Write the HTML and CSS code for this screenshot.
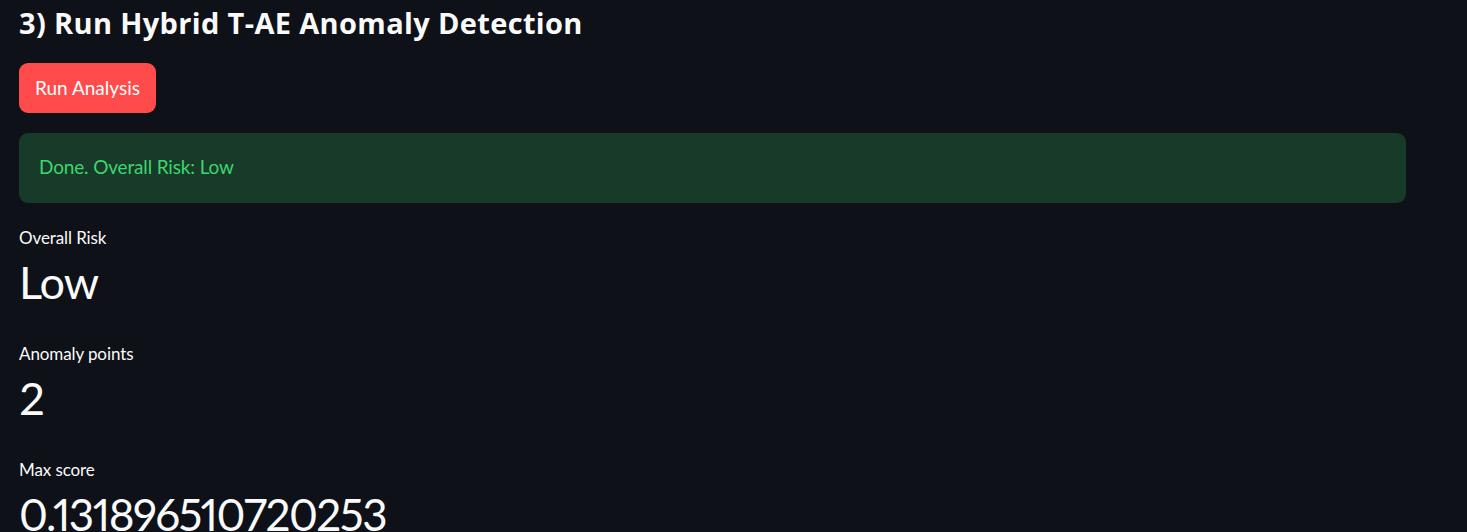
FILE: index.html
```html
<!DOCTYPE html>
<html lang="en">
<head>
<meta charset="utf-8">
<title>Run Hybrid T-AE Anomaly Detection</title>
<link rel="stylesheet" href="styles.css">
</head>
<body>
<main class="main">
  <h3 class="section-title">3) Run Hybrid T-AE Anomaly Detection</h3>
  <div class="button-row">
    <button class="btn-primary" type="button">Run Analysis</button>
  </div>
  <div class="alert-success">Done. Overall Risk: Low</div>
  <div class="metrics">
    <div class="metric">
      <div class="metric-label">Overall Risk</div>
      <div class="metric-value">Low</div>
    </div>
    <div class="metric">
      <div class="metric-label">Anomaly points</div>
      <div class="metric-value">2</div>
    </div>
    <div class="metric">
      <div class="metric-label">Max score</div>
      <div class="metric-value metric-value--long">0.131896510720253</div>
    </div>
  </div>
</main>
</body>
</html>
```
FILE: styles.css
```css
html, body {
  margin: 0;
  padding: 0;
  background: #0e1117;
  color: #fafafa;
  font-family: "Lato", "Noto Sans", sans-serif;
  overflow: hidden;
}

.main {
  width: 1387px;
  padding: 5px 0 0 19px;
  display: flex;
  flex-direction: column;
}

.section-title {
  margin: 0;
  font-family: "Open Sans", "Lato", sans-serif;
  font-size: 29px;
  line-height: 36px;
  font-weight: 700;
  letter-spacing: 0.35px;
  color: #fafafa;
}

.button-row {
  margin-top: 22px;
  display: flex;
}

.btn-primary {
  height: 50px;
  padding: 0 16px;
  border: none;
  border-radius: 9px;
  background: #ff4b4b;
  color: #ffffff;
  font-family: inherit;
  font-size: 19px;
  line-height: 50px;
  cursor: pointer;
}

.alert-success {
  margin-top: 20px;
  height: 70px;
  box-sizing: border-box;
  padding: 0 20px 3px;
  display: flex;
  align-items: center;
  border-radius: 9px;
  background: #183a29;
  color: #3dd56d;
  font-size: 19px;
  letter-spacing: -0.15px;
}

.metrics {
  margin-top: 25px;
  display: flex;
  flex-direction: column;
  gap: 37px;
}

.metric {
  display: flex;
  flex-direction: column;
  gap: 9px;
}

.metric-label {
  font-size: 17px;
  line-height: 20px;
  letter-spacing: -0.1px;
  color: #fafafa;
}

.metric-value {
  font-size: 45px;
  line-height: 50px;
  letter-spacing: -1px;
  color: #fafafa;
  white-space: nowrap;
}

.metric-value--long {
  font-size: 44px;
  letter-spacing: -1.5px;
  font-variant-numeric: proportional-nums;
}
```
